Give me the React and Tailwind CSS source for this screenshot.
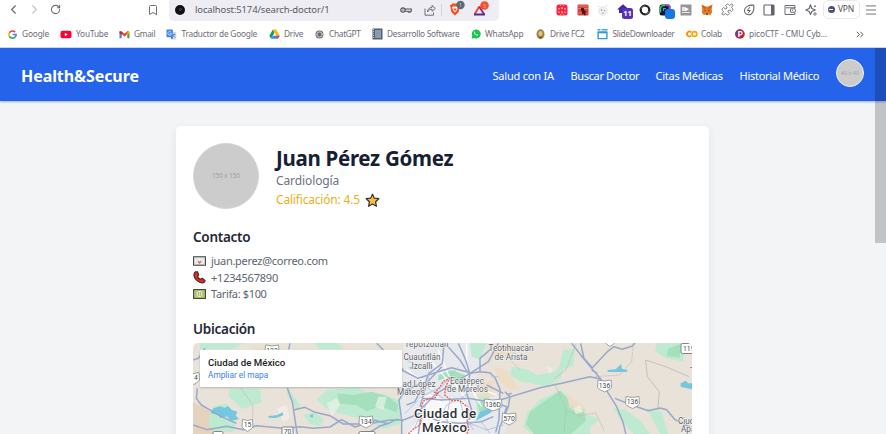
import React from "react";
import { Puzzle, Bookmark, RotateCw, ChevronLeft, ChevronRight, Menu } from "lucide-react";

function Svg({ w = 12, h = 12, box = "0 0 12 12", children }) {
  return (
    <svg width={w} height={h} viewBox={box} fill="none" className="block shrink-0 overflow-visible">
      {children}
    </svg>
  );
}

const GoogleIcon = () => (
  <Svg w={9} h={9} box="0 0 24 24">
    <path d="M19 5.5A9.7 9.7 0 0 0 3.7 7.4" stroke="#ea4335" strokeWidth="4.4" />
    <path d="M3.7 7.4a9.7 9.7 0 0 0 0 9.2" stroke="#fbbc05" strokeWidth="4.4" />
    <path d="M3.7 16.6A9.7 9.7 0 0 0 18.2 19.4" stroke="#34a853" strokeWidth="4.4" />
    <path d="M12.5 12H21.6c0 3-1.2 5.6-3.4 7.4" stroke="#4285f4" strokeWidth="4.4" />
  </Svg>
);
const YouTubeIcon = () => (
  <Svg w={12} h={9} box="0 0 12 9">
    <rect x="0.5" y="0.8" width="11" height="7.4" rx="2" fill="#ff0033" />
    <path d="M4.8 2.7v3.6l3-1.8z" fill="#fff" />
  </Svg>
);
const GmailIcon = () => (
  <Svg w={11} h={9} box="0 0 11 9">
    <path d="M0.5 2v6.2h2.2V3.5z" fill="#4285f4" />
    <path d="M10.5 2v6.2H8.3V3.5z" fill="#34a853" />
    <path d="M1.3 1.7 5.5 5l4.2-3.3" stroke="#ea4335" strokeWidth="2.2" />
    <path d="M8.3 2.2 10.5.8v2.5L8.3 4.7z" fill="#fbbc04" />
    <path d="M2.7 2.2.5.8v2.5l2.2 1.4z" fill="#c5221f" />
  </Svg>
);
const TranslateIcon = () => (
  <Svg w={11} h={11}>
    <path d="M4 3h7.2v8.5H6.5z" fill="#d3d8df" />
    <rect x="0.5" y="0.5" width="7" height="8.6" rx="0.8" fill="#4285f4" />
    <path d="M5.6 3.5A2 2 0 1 0 6 5H4.2" stroke="#d5e4ff" strokeWidth="0.9" />
    <path d="M7 6h3.5M8.8 5v1c0 1.5-1 2.800-2 3.400M7.700 6.800l2.400 2.700" stroke="#5e7fa8" strokeWidth="0.8" />
    <path d="M5 9.100h2.500L6.500 11.500z" fill="#1a56c4" />
  </Svg>
);
const DriveIcon = () => (
  <Svg w={11} h={10} box="0 0 12 11">
    <path d="M4.200.6 0.300 7.400l1.900 3.200L6 3.800z" fill="#0f9d58" />
    <path d="M4.200.6h3.600l4 6.800H8z" fill="#ffba00" />
    <path d="M4.100 7.400h7.600l-1.900 3.200H2.200z" fill="#4285f4" />
    <path d="M8 7.400h3.700l-1.900 3.200z" fill="#ea4335" />
  </Svg>
);
const ChatIcon = () => (
  <Svg w={9} h={9} box="0 0 12 12">
    <circle cx="6" cy="6" r="5.300" fill="#62666a" />
    {[0, 60, 120, 180, 240, 300].map((r) => (
      <path key={r} d="M6 1.800 8.800 3.400v3" stroke="#f4f4f4" strokeWidth="0.7" transform={`rotate(${r} 6 6)`} />
    ))}
  </Svg>
);
const NotebookIcon = () => (
  <Svg w={11} h={12} box="0 0 11 12">
    <rect x="0.5" y="0.5" width="10" height="11" fill="#52616d" />
    <path d="M3 2h6v8H3z" fill="#8aa1b2" />
    <path d="M1.500 1v10" stroke="#b9c5ce" strokeDasharray="1 1" />
    <path d="M4 4h4M4 6h4M4 8h4" stroke="#7790a2" strokeWidth="0.7" />
  </Svg>
);
const WhatsIcon = () => (
  <Svg w={10} h={10}>
    <path d="M0.600 11.600 1.500 8.500A5.400 5.400 0 1 1 3.600 10.700z" fill="#16c94b" />
    <path d="M3.700 3.500c.5-.8 1-.4 1.300.6l-.4.800c.5 1 1.100 1.500 2 1.900l.7-.6c1.100.4 1.500.6 1 1.300-1 1.100-4.900-.7-4.600-4z" fill="#fff" />
  </Svg>
);
const CrestIcon = () => (
  <Svg w={9} h={11} box="0 0 9 11">
    <ellipse cx="4.500" cy="5.300" rx="4" ry="5" fill="#a3833f" />
    <ellipse cx="4.500" cy="4.500" rx="2" ry="2.600" fill="#d9c58d" />
    <path d="M3 8.500h3" stroke="#6c511d" />
  </Svg>
);
const SlideIcon = () => (
  <Svg w={11} h={11}>
    <path d="M0.500 0.800h3.200M5 .8h6.500" stroke="#44a8dd" strokeWidth="1.500" />
    <path d="M1.200 3.500h9.600v7H1.200z" fill="#fff" stroke="#2d9bd5" strokeWidth="1.500" />
    <path d="M1 3.700h10" stroke="#2d9bd5" strokeWidth="2" />
  </Svg>
);
const ColabIcon = () => (
  <Svg w={12} h={8} box="0 0 12 8">
    <path d="M5.100 2.300A2.400 2.400 0 1 0 5.100 5.700" stroke="#ff8b00" strokeWidth="1.700" />
    <circle cx="8.400" cy="4" r="2.400" stroke="#f9ab00" strokeWidth="1.700" />
  </Svg>
);
const PicoIcon = () => (
  <Svg w={10} h={10}>
    <circle cx="6" cy="6" r="5.700" fill="#c41c3b" />
    <path d="M6 .3a5.700 5.700 0 0 0-3 10.500z" fill="#7c3b78" />
    <path d="M4.600 9.500V3h2a1.900 1.900 0 0 1 0 3.900h-2" stroke="#fff" strokeWidth="1.500" />
  </Svg>
);

const bookmarks = [
  ["Google", GoogleIcon, "w-[52px]", "w-[14px]", "tracking-[-0.15px]"],
  ["YouTube", YouTubeIcon, "w-[59px]", "w-[16px]", "tracking-[-0.18px]"],
  ["Gmail", GmailIcon, "w-[47px]", "w-[15px]", "tracking-[-0.3px]"],
  ["Traductor de Google", TranslateIcon, "w-[103px]", "w-[15.5px]", "tracking-[-0.23px]"],
  ["Drive", DriveIcon, "w-[46px]", "w-[15px]", "tracking-[-0.3px]"],
  ["ChatGPT", ChatIcon, "w-[57px]", "w-[14px]", "tracking-[-0.3px]"],
  ["Desarrollo Software", NotebookIcon, "w-[99px]", "w-[15px]", "tracking-[-0.25px]"],
  ["WhatsApp", WhatsIcon, "w-[65px]", "w-[14px]", "tracking-[-0.2px]"],
  ["Drive FC2", CrestIcon, "w-[61px]", "w-[14px]", "tracking-[-0.28px]"],
  ["SlideDownloader", SlideIcon, "w-[89px]", "w-[15.5px]", "tracking-[-0.28px]"],
  ["Colab", ColabIcon, "w-[49px]", "w-[15px]", "tracking-[-0.25px]"],
  ["picoCTF - CMU Cyb...", PicoIcon, "w-[121px]", "w-[14px]", "tracking-[-0.08px]"],
];

const extensions = [
  <Svg key="a" w={12} h={12}>
    <rect x="0.500" y="0.500" width="11" height="11" rx="2.500" fill="#fb1f55" />
    <path d="M2 4h2v1.500H2zM5 3h2v2H5zM8 4h2v1.500H8zM2 7.500h2V9H2zM5 7h2v2.500H5zM8 7.500h2V9H8z" fill="#ff9a50" />
    <path d="M4 1h1v1H4zM7 1h1v1H7zM4 10h1v1H4zM7 10h1v1H7z" fill="#ff8a60" />
  </Svg>,
  <Svg key="b" w={12} h={12}>
    <rect x="0.500" y="0.500" width="11" height="11" rx="1" fill="#d6453c" />
    <path d="M1 2h10M1 4.500h10M1 9h10" stroke="#f2a09a" strokeWidth="0.6" />
    <path d="M5 4v6.500l1.500-1 1 2 1.500-.8-1-2h2z" fill="#411c1a" />
    <path d="M4 4h3v3H4z" fill="#411c1a" />
  </Svg>,
  <Svg key="c" w={12} h={12}>
    <circle cx="6" cy="7" r="4.200" fill="#f2f2f2" stroke="#e5e5e5" />
    <circle cx="4.500" cy="6" r="0.7" fill="#888" />
    <circle cx="7.500" cy="6.500" r="0.6" fill="#777" />
    <path d="M5 9h2" stroke="#b9a3a3" />
    <path d="M1.500 2.500h1M9 1.500h1" stroke="#ccc" />
  </Svg>,
  <Svg key="d" w={12} h={12}>
    <path d="M-1 5.500 5 .2l6 5.300H9V9H1V5.500z" fill="#4527a5" />
    <rect x="4" y="4" width="11" height="11" rx="2.500" fill="#5933b5" />
    <text x="9.500" y="12.300" textAnchor="middle" fontSize="7.500" fontWeight="700" fill="#fff">11</text>
  </Svg>,
  <Svg key="e" w={12} h={12}>
    <circle cx="6" cy="6" r="4.300" stroke="#222" strokeWidth="2.300" />
    <path d="M2 5a4 4 0 0 1 4-3M10 7a4 4 0 0 1-4 3" stroke="#888" strokeWidth="0.8" />
  </Svg>,
  <Svg key="f" w={12} h={12}>
    <rect x="-0.500" y="0.500" width="11" height="11" rx="2.500" fill="#141432" />
    <path d="M0.500 8.500V3.500L2.500 1.500h3" stroke="#31c764" strokeWidth="1.500" />
    <path d="M6 1.500h3.300v3.500" stroke="#a846d8" strokeWidth="1.500" />
    <path d="M3.500 7V4.500H6" stroke="#15b5df" strokeWidth="1.200" />
    <rect x="5" y="5" width="10" height="10" rx="3" fill="#1877e8" />
  </Svg>,
  <Svg key="g" w={12} h={12}>
    <rect x="0.500" y="0.500" width="11" height="11" fill="#969696" />
    <path d="M2 3h3v4H2zM2 9h8V8H2z" fill="#e5e5e5" />
    <path d="m5 3 4 2.200L5 7.400z" fill="#fff" />
  </Svg>,
  <Svg key="h" w={12} h={12}>
    <path d="m.5.500 4 2h3l4-2-.8 5 .5 3-2 2.500-2-.6-1.200.8-1.200-.8-2 .6-2-2.500.5-3z" fill="#e77721" />
    <path d="m.5.500 4 3-.5 2zM11.500.500l-4 3 .5 2z" fill="#b95716" />
    <path d="M3.200 6h1.300v1.300zM8.800 6H7.500v1.300zM5 9.500h2v1H5z" fill="#2d2a31" />
  </Svg>,
  <Puzzle key="i" size={13} strokeWidth={1.700} className="-scale-x-100 rotate-90" />,
  <Svg key="j" w={12} h={12}>
    <path d="M10.800 1.200C5.500.8 1.500 3 1.500 6.500a4.300 4.300 0 0 0 4.300 4.300c3.800 0 5.500-4.300 5-9.600z" stroke="#63646b" strokeWidth="1.100" />
    <path d="M6.800 3.200 4.300 6.500h3L5 9.300" stroke="#63646b" strokeWidth="1" />
  </Svg>,
  <Svg key="k" w={12} h={12}>
    <rect x="1" y="1" width="10" height="10" rx="0.800" stroke="#63646b" strokeWidth="1.100" />
    <path d="M8 1h3v10H8z" fill="#63646b" />
  </Svg>,
  <Svg key="l" w={12} h={12}>
    <path d="M10.800 4V1.500H1v9h9.800V8.500M2 3.800h9.500" stroke="#6b6c72" strokeWidth="1" />
    <rect x="6.500" y="4.800" width="4.800" height="3.500" rx="0.500" stroke="#6b6c72" strokeWidth="1" />
    <circle cx="8.500" cy="6.500" r="0.600" fill="#6b6c72" />
  </Svg>,
  <Svg key="m" w={12} h={12}>
    <path d="M5.500.8 6.800 4.500 10.300 6 6.800 7.500 5.500 10.500 4.200 7.500.8 6 4.200 4.500z" stroke="#63646b" strokeWidth="1.100" strokeLinejoin="round" />
    <circle cx="10" cy="2.300" r="1" fill="#777" />
    <circle cx="10" cy="10" r="1.200" stroke="#63646b" strokeWidth="0.900" />
  </Svg>,
];

function BrowserChrome() {
  return (
    <div className="h-12 shrink-0 overflow-hidden border-b border-[#d5d9e3] bg-white text-[#6a6b72]">
      <div className="flex h-[21px] items-center">
        <div className="flex w-[169px] items-center pb-[2px]">
          <ChevronLeft size={15} strokeWidth={1.800} className="ml-[6px]" />
          <ChevronRight size={15} strokeWidth={1.800} className="ml-[6px] text-[#c6c6c9]" />
          <RotateCw size={11} strokeWidth={2.200} className="ml-[8px]" />
          <Bookmark size={12} strokeWidth={1.900} className="ml-[86px]" />
        </div>
        <div className="flex h-[21px] w-[330px] items-center rounded-b-[5px] bg-[#ededf3] pb-[2px]">
          <div className="ml-[6px] flex size-[10px] items-center justify-center rounded-full bg-[#111114]">
            <div className="size-[3px] rounded-full border border-[#55555d]" />
          </div>
          <span className="ml-[10px] w-[205px] text-[9.500px] leading-4 tracking-[-0.14px] whitespace-nowrap text-[#5a5a64]">localhost:5174/search-doctor/1</span>
          <Svg w={12} h={8} box="0 0 12 8">
            <circle cx="3" cy="4" r="2.200" stroke="#555" strokeWidth="1.200" />
            <circle cx="3" cy="4" r="0.700" fill="#555" />
            <path d="M5 3h6.300v2.200h-1.200v1H8.300v-1H5" stroke="#555" strokeWidth="1.100" />
          </Svg>
          <div className="ml-[12px]">
            <Svg w={12} h={12}>
              <path d="M1 4.500v6.700h8.500V8.500M3.500 8c.2-2.900 1.800-4.400 4.500-4.500V1.300L11.300 4.500 8 7.300V5.300C6 5.300 4.500 6.200 3.500 8z" stroke="#62626a" strokeWidth=".9" />
            </Svg>
          </div>
          <div className="ml-[5px] h-3 w-px bg-[#d5d5dd]" />
          <div className="ml-[7px]">
            <Svg w={12} h={13} box="0 0 12 13">
              <path d="m2.500 1.500 1-1h5l1 1 1.500.4-.5 2-.8 5.200L6 12.500 2.300 9.100 1.500 3.900l-.8-1.600z" fill="#f45122" />
              <path d="m3 4 1.800-.5h2.400L9 4 8 7 6 9.500 4 7z" fill="#fff" />
              <path d="m4.500 5 1.500.7L7.500 5 7 7.500H5z" fill="#f45122" />
              <circle cx="11.500" cy="2" r="4.200" fill="#606775" />
              <text x="11.500" y="4" textAnchor="middle" fontSize="5" fill="#d5d8de">1</text>
            </Svg>
          </div>
          <div className="ml-[12px]">
            <Svg w={13} h={12} box="0 0 13 12">
              <path d="M1.500 10.500 6.200 2.500" stroke="#f34d24" strokeWidth="2" />
              <path d="m6.200 2.500 5 8" stroke="#9d267b" strokeWidth="2" />
              <path d="M1 10.500h11" stroke="#552b8d" strokeWidth="2" />
              <circle cx="11.500" cy="1.500" r="4.300" fill="#f4512e" />
              <text x="11.500" y="3.500" textAnchor="middle" fontSize="5" fill="#ffb9a8">3</text>
            </Svg>
          </div>
        </div>
        <div className="ml-[52.500px] flex w-[270px] shrink-0 items-center pb-[2px]">
          {extensions.map((icon, i) => (
            <div key={i} className="flex w-[20.750px] shrink-0 justify-center">{icon}</div>
          ))}
        </div>
        <div className="mb-[2px] ml-[1px] flex h-[19px] w-[37px] shrink-0 items-center justify-center gap-[3px] rounded-[5px] border border-[#e9e9ed]">
          <div className="flex size-[7px] items-center rounded-full bg-[#4a4f7c] px-[1.500px]"><div className="h-px w-full bg-white" /></div>
          <span className="text-[8.500px] tracking-[-0.2px] text-[#50505a]">VPN</span>
        </div>
        <Menu size={14} strokeWidth={1.600} className="mb-[2px] ml-[4px]" />
      </div>
      <div className="flex h-[26px] items-center pl-2 text-[8.300px] leading-3 text-[#6c6d74]">
        {bookmarks.map(([name, Icon, width, iconWidth, tracking]) => (
          <div key={name} className={`flex shrink-0 items-center whitespace-nowrap ${width}`}>
            <div className={`shrink-0 ${iconWidth}`}><Icon /></div>
            <span className={tracking}>{name}</span>
          </div>
        ))}
        <Svg w={8} h={7} box="0 0 8 7">
          <path d="m.8.800 2.700 2.700L.8 6.200M4.300.800 7 3.500 4.300 6.200" stroke="#555" />
        </Svg>
      </div>
    </div>
  );
}

function Shield({ x, y, n }) {
  const w = n.length > 3 ? 17 : n.length > 2 ? 13 : 10;
  return (
    <g transform={`translate(${x} ${y})`}>
      <path d={`M${-w / 2} -5.500Q0 -3.500 ${w / 2} -5.500L${w / 2 + 0.500} 2Q${w / 2 - 1} 4 0 6.500Q${-w / 2 + 1} 4 ${-w / 2 - 0.500} 2Z`} fill="#fff" stroke="#8a8c8f" strokeWidth="0.8" />
      <text y="2.300" textAnchor="middle" fontSize="6.800" fill="#44484d">{n}</text>
    </g>
  );
}

/* Terrain and roads are drawn on a grid three times finer than the labels. */
function CityMap() {
  return (
    <svg viewBox="193 343 499 91" className="block h-full w-full font-[Roboto,sans-serif]">
      <rect x="193" y="343" width="499" height="91" fill="#e8e2d8" />
      <g transform="translate(190 340) scale(.33333)">
        <path d="M0 180l60 35 20 70H0z" fill="#e5d3bd" />
        <path d="M640 0h250l-10 70-25 30 30 50 60 30 15 50-20 60H640l-15-100 12-60z" fill="#e7e9ec" />
        <path d="M700 180l60 0 60 0 20 30-15 72H650l45-55z" fill="#f7f8f9" />
        <g fill="#bfead2">
          <path d="M30 10h130l-35 18H30zM370 8h70l20 20h-70zM120 145l90 2 5 40-60 20-40-40zM65 200l45-10 30 40-10 45H75l-20-20zM295 145l35 50-5 20-35-50zM380 180l30-30 90-8 40 20 40 0 50 20v70l-50 15-45-25-60-15-55-15zM340 225l30-8 32 20-12 22-30-8zM840 10h50l-20 50-25-10zM965 80l45 8 30 18 55-10 10 25-35 18-80-15-30-20zM1120 30l35-3-5 50-30 12-8 30-28-5 25-40zM855 170l40-10 10 30-40 45z" />
          <path d="M1010 220l40-40 60-30 20 15 10 20 45 20 5 20 40 12-30 25v20h-170l-30-20zM1400 10h80v55l-55-12-30-20zM1270 205l35 5 45 30 30 42h-50l-40-45zM1370 205l45 10 20 67h-25z" />
        </g>
        <g fill="#a3e0bb">
          <path d="M745 105l40-15 40 15-10 25-45-18-25 10zM440 160l50 5 55-10 50 15 30 25-5 22-50-18-40 15-30-18-50-5zM1020 215l35-25 55-38 25 25 5 20 40 10 8 35-45 40h-110l-25-30zM1435 25l35-12v40l-40-5zM863 190l25-10 15 20-30 35zM0 0z" />
        </g>
        <g fill="#f0dcc0" opacity=".7"><path d="M900 30l70-15 15 18-60 25zM910 80l40 10 35 55-25 5-30-25zM860 130l50-10v50l-50 5zM1130 160l60 45-15 15-38-15zM180 20l50 0 30 15h-50z" /></g>
        <g fill="#f5f3ee" opacity=".6"><path d="M410 190l30-15 10 20-25 35zM260 205l30-10 10 40-20 10zM565 170l25 0-10 40-25-10zM1070 80l20 5-10 18zM1150 205l20-10 8 20-20 8z" /></g>
        <g fill="#74c7df">
          <path d="M70 205l22-6 12 5 10-6 12 12 16 5-5 12 10 10-25 6-10-14-20 5-10-10-20-4zM235 228l25-2 18-9 2 9-22 8-22-1zM360 225l10-2-2 10-7-2zM1252 90l25-2 16-16 3 14 18 5-5 5-55 0zM1472 130l15-8 8 8 12 0v18l-15-3-20-5zM870 215l30-10 5 12-28 15-20 10zM655 83l18-5-8 9z" />
        </g>
        <g stroke="#b5b5b0" strokeWidth="2.200" fill="none" strokeDasharray="5 3">
          <path d="M153 145l35 50 0 50-20 20M1093 115l35-25 30-80M1093 130l35 75-5 70M1128 212l40 15 50-8 25 55M1215 110l75-5 35-40 5-55M975 30l-15 30 30 30" />
          <path d="M1367 60l5 50 36 45-5 55M1367 60l60 20 70 30" strokeDasharray="none" />
        </g>
        <g stroke="#fff" strokeWidth="4" fill="none">
          <path d="M650 90l60 40 45 60M660 190l60-25 100 80M745 30l30 75 60 80M830 10v110l45 80M680 260l80-35 50 50M830 130l90 35M755 235l110 10M720 60l70 80" />
        </g>
        <g stroke="#9aa8ca" strokeWidth="4.500" fill="none" strokeLinejoin="round">
          <path d="M10 60l15-5 20-30M22 145l-3 30 15 20 60 35 45 20M10 255l40 14 60-10 50 10 40-12 80 8 50-5 40 5 50-4 35-22 40 22 60-20 40 10" />
          <path d="M292 145l15 40 15 100M300 10l-4 18M310 210l35-8 30 15 45 10 40 25 70 0 70-12 40 0M530 283l40-25 30-10 20-10 20 5" />
          <path d="M560 10l80 80M635 90l50 25 60-20 40-12 55 15M635 285l0-45-8-60 20-30 60-25 10-25 40-30 5-60M650 195l25-10 20-40 60-65M765 10l45 50 25 40M805 10l20 45 14 45M925 10l-30 55-55 35" />
          <path d="M840 100l30-5 30 3 15 15 15 35-3 90-10 40M870 95l0-40 35-30M840 100l-10 60 15 50-8 30M840 100l-100 60-45 45-10 77M710 130l-20 70M695 175l60 5 80-5 60 10" />
          <path d="M945 155l15 15-5 30-25 60-5 25M930 180l120-37 65-13 85-20 35 8M940 160l-50-25M950 165l15-5M905 185l45 15-10 30M640 240l50-20 60 25 60 5 65-5 35-15" />
          <path d="M1145 10l35 45 50 60 25 45 25 40 20 50 8 35M1172 10l10 45 25 28 45-48 20-15 25 8 30-10 10-12M1205 90l17 10M1275 175l50 20 50 17 35-8 20 5 25 30 45 22" />
        </g>
        <g stroke="#b1bfd9" strokeWidth="2.600" fill="none">
          <path d="M645 220l50-50 60-30 50-60M670 270l40-80M740 260l30-65 60-30M765 235l30 40 60-30M715 95l0 50 45 30M780 180l-10 50 10 50M810 180l10 40 30 50M650 60l60 30M870 240l30 40M840 250l50 20 50-15M905 110l20 0" />
        </g>
        <path d="M655 282l15-15 20-12 5-20-2-32 8-20 18-8 15 0 10-15-10-2 15-15 10-18 20-10-12 25-3 25 20 17 25 0 25 20 5 25-8 12 5 30-8 18 20 5" fill="none" stroke="#e8635f" strokeWidth="4" strokeDasharray="6 3" />
      </g>
      <g fontSize="8.200" fill="#5f6368" textAnchor="middle" stroke="#f3f3f3" strokeWidth="1.200" paintOrder="stroke" strokeLinejoin="round">
        <text x="426.500" y="347" textLength="44">Tepotzotlán</text>
        <text x="422" y="360" textLength="37">Cuautitlán</text>
        <text x="422" y="368.500">Izcalli</text>
        <text x="419" y="386.500" textLength="33">ad López</text>
        <text x="411" y="395" textLength="28">Mateos</text>
        <text x="467" y="383.500" textLength="34">Ecatepec</text>
        <text x="467.500" y="391.700" textLength="41">de Morelos</text>
        <text x="511" y="351.300" textLength="45">Teotihuacán</text>
        <text x="511" y="359.700" textLength="33">de Arista</text>
        <text x="678" y="423.500" textAnchor="start">Ciudad</text>
        <text x="681" y="432" textAnchor="start">Apan</text>
        <text x="690" y="374" textAnchor="start">Tl</text>
      </g>
      <g fontSize="13.300" fontWeight="500" fill="#303236" textAnchor="middle" stroke="#fff" strokeWidth="1.800" paintOrder="stroke">
        <text x="445" y="418" textLength="62">Ciudad de</text>
        <text x="444.500" y="432" textLength="45">México</text>
      </g>
      <Shield x={247.500} y={425} n="15" />
      <Shield x={366} y={421.500} n="134" />
      <Shield x={493} y={404.500} n="136D" />
      <Shield x={509} y={418.500} n="570" />
      <Shield x={604.500} y={385.500} n="136" />
      <Shield x={632.500} y={402} n="136" />
      <Shield x={194} y={378} n="14" />
      <Shield x={272} y={350.500} n="132" />
      <Shield x={610} y={340} n="" />
      <g fill="#fff" stroke="#74777b" strokeWidth=".9">
        <rect x="681" y="343.500" width="16" height="10" rx="1.500" />
        <rect x="282" y="427" width="11" height="10" rx="1.500" />
        <rect x="359" y="431.500" width="16" height="10" rx="1.500" />
        <rect x="213" y="431.500" width="10" height="10" rx="1.500" />
      </g>
      <text x="683" y="351" fontSize="6.800" fill="#44484d">119</text>
      <text x="287.500" y="434" textAnchor="middle" fontSize="6.800" fill="#44484d">70</text>
    </svg>
  );
}

const StarIcon = () => (
  <Svg w={15} h={15} box="0 0 15 15">
    <path d="m7.500 1.200 1.900 4 4.400.5-3.200 3.100.8 4.500-3.900-2.200-3.900 2.200.8-4.500L1.200 5.700l4.400-.5z" fill="#f5c13c" stroke="#303030" strokeWidth="1.200" strokeLinejoin="round" />
  </Svg>
);
const MailIcon = () => (
  <Svg w={13} h={10} box="0 0 13 10">
    <rect x=".6" y=".8" width="11.800" height="8.400" fill="#eeeeee" stroke="#3d4041" strokeWidth="1.100" />
    <path d="m1 1.300 5.500 4L12 1.300M1 9l4-4M12 9 8 5" stroke="#d3d5d7" strokeWidth=".6" />
    <path d="M6.500 8 4.800 6.300c-.3-1.400 1.200-1.600 1.700-.6.500-1 2-.8 1.700.6z" fill="#ee6a50" />
  </Svg>
);
const PhoneIcon = () => (
  <Svg w={13} h={13} box="0 0 13 13">
    <path d="M2.300.9c-2.200 1.600-1.700 4.900.6 7.600 2.500 2.900 6.300 4.400 8.300 2.800l1-1.600-2.900-2.500-1.700 1C6.200 8 4.800 6.300 4.600 5.200l1.100-1.300L4.500.8z" fill="#e22b22" stroke="#402324" strokeWidth="1.100" strokeLinejoin="round" />
  </Svg>
);
const MoneyIcon = () => (
  <Svg w={13} h={10} box="0 0 13 10">
    <rect x=".6" y=".6" width="11.800" height="8.800" fill="#b7ce7c" stroke="#3c432e" strokeWidth="1.100" />
    <path d="M2.300 2.500v5M10.700 2.500v5" stroke="#a0b56c" strokeWidth=".7" />
    <ellipse cx="6.500" cy="5" rx="2.500" ry="3" fill="#e5eccb" />
    <path d="M5.600 3v4M7.400 3v4" stroke="#8c9a67" strokeWidth=".7" />
  </Svg>
);

export default function App() {
  return (
    <div className="relative flex h-[434px] w-[886px] flex-col overflow-hidden bg-[#f3f4f6] font-['Noto_Sans','Open_Sans',sans-serif]">
      <BrowserChrome />
      <header className="flex h-[53px] shrink-0 items-center bg-[#2563eb] pl-[21px] text-white shadow-[0_1px_2px_rgba(37,99,235,0.45)]">
        <div className="w-[471.500px] pt-[3px] text-[16px] font-bold tracking-[-0.08px]">Health&amp;Secure</div>
        <nav className="flex pt-[3px] text-[11px] whitespace-nowrap">
          <a className="w-[78px] tracking-[-0.2px]">Salud con IA</a>
          <a className="w-[85px] tracking-[-0.35px]">Buscar Doctor</a>
          <a className="w-[84px] tracking-[-0.25px]">Citas Médicas</a>
          <a className="w-[96.500px] tracking-[-0.27px]">Historial Médico</a>
        </nav>
        <div className="mb-[3px] flex size-[28px] items-center justify-center rounded-full border-[1.500px] border-[#eef2fb] bg-[#cccccc] text-[5.500px] text-[#a4a4a4]">40 x 40</div>
      </header>
      <main className="flex flex-1 justify-center pt-[25px] pr-px">
        <section className="h-[340px] w-[533px] rounded-[5px] bg-white px-[17px] pt-[17px] shadow-[0_3px_10px_rgba(0,0,0,0.07)]">
          <div className="flex h-[67px]">
            <div className="flex size-[66px] items-center justify-center rounded-full border border-[#d3d5da] bg-[#cccccc] text-[6.200px] text-[#9e9e9e]">150 x 150</div>
            <div className="ml-[17px] pt-px whitespace-nowrap">
              <h1 className="h-[29px] text-[20.500px] leading-[29px] font-bold tracking-[-0.3px] text-[#172033]">Juan Pérez Gómez</h1>
              <p className="h-[18px] text-[12px] leading-[16px] tracking-[-0.1px] text-[#6b7280]">Cardiología</p>
              <p className="flex h-[18px] items-center gap-[3px] text-[12px] leading-[18px] text-[#eab020]"><span className="w-[86px] tracking-[-0.18px]">Calificación: 4.5</span><StarIcon /></p>
            </div>
          </div>
          <h2 className="mt-[17px] h-[20px] text-[13.500px] leading-[20px] font-semibold tracking-[-0.28px] text-[#1f2937]">Contacto</h2>
          <div className="mt-[6px] text-[11px] leading-[16.600px] text-[#5b6470]">
            <p className="flex h-[16.600px] items-center gap-[5px]"><MailIcon /><span className="tracking-[-0.29px]">juan.perez@correo.com</span></p>
            <p className="flex h-[16.600px] items-center gap-[5px]"><PhoneIcon /><span className="tracking-[-0.2px]">+1234567890</span></p>
            <p className="flex h-[16.600px] items-center gap-[5px]"><MoneyIcon /><span className="tracking-[-0.35px]">Tarifa: $100</span></p>
          </div>
          <h2 className="mt-[16px] h-[24px] text-[13.500px] leading-[20px] font-semibold tracking-[-0.28px] text-[#1f2937]">Ubicación</h2>
          <div className="relative h-[91px] w-[499px] overflow-hidden rounded-t-[5px]">
            <CityMap />
            <div className="absolute top-[7px] left-[7px] h-[37px] w-[202px] rounded-[1px] bg-white px-2 pt-[7px] font-[Roboto,sans-serif] shadow-[0_1px_2px_rgba(0,0,0,0.2)]">
              <div className="text-[9.700px] leading-[12px] font-medium text-[#202124]">Ciudad de México</div>
              <div className="mt-px text-[8.300px] leading-[11px] text-[#3a82ea]">Ampliar el mapa</div>
            </div>
          </div>
        </section>
      </main>
      <div className="absolute top-12 right-0 h-[195px] w-[11px] bg-black/20" />
    </div>
  );
}
